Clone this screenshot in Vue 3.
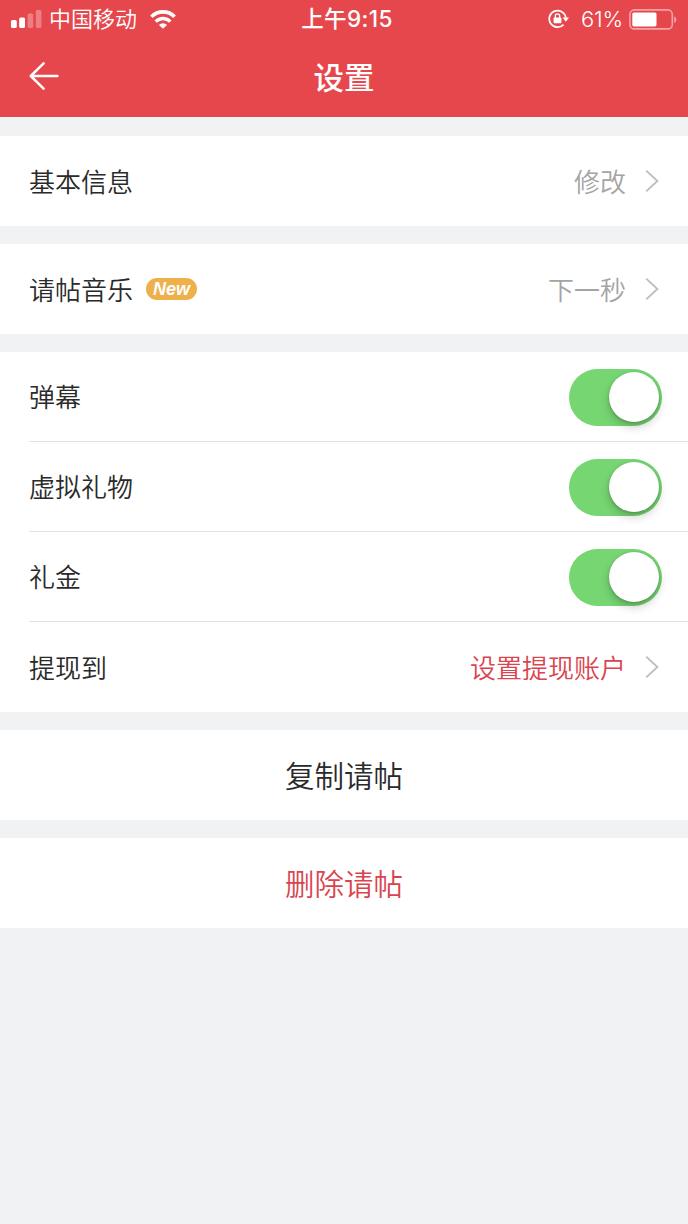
<template>
  <div class="page">
    <header class="header">
      <div class="status-bar">
        <div class="status-left">
          <svg class="signal" viewBox="0 0 31 18">
            <rect x="0" y="10" width="5.8" height="8" rx="1.6" />
            <rect x="8.2" y="7.4" width="5.8" height="10.6" rx="1.6" />
            <rect x="16.6" y="3.6" width="5.6" height="14.4" rx="1.6" opacity="0.3" />
            <rect x="24.8" y="0" width="5.6" height="18" rx="1.6" opacity="0.3" />
          </svg>
          <span class="carrier">中国移动</span>
          <svg class="wifi" viewBox="0 0 26 19">
            <path d="M1.4 6.8A16.2 16.2 0 0 1 24.6 6.8" fill="none" stroke="#fff" stroke-width="3.6" />
            <path d="M5.7 11.6A10.2 10.2 0 0 1 20.3 11.6" fill="none" stroke="#fff" stroke-width="3.3" />
            <path d="M13 18.8L8.9 15A5.8 5.8 0 0 1 17.1 15Z" />
          </svg>
        </div>
        <span class="time">上午9:15</span>
        <div class="status-right">
          <svg class="lock" viewBox="0 0 21 20">
            <path d="M15.6 15.6A8.3 8.3 0 1 1 17.8 8.6" fill="none" stroke="#fff" stroke-width="1.7" />
            <path d="M14.6 8.6H21L17.8 12.8Z" />
            <rect x="5.6" y="8.5" width="7.8" height="5.8" rx="0.8" />
            <path d="M7.3 9V7a2.2 2.2 0 0 1 4.4 0V9" fill="none" stroke="#fff" stroke-width="1.3" />
          </svg>
          <span class="percent">61%</span>
          <svg class="battery" viewBox="0 0 49 21">
            <rect x="0.9" y="0.9" width="42.4" height="19" rx="4.5" fill="none" stroke="#fff" stroke-opacity="0.5" stroke-width="1.6" />
            <rect x="3.3" y="3.4" width="24.2" height="14" rx="1.6" />
            <path d="M45.2 7.2a3.8 3.8 0 0 1 0 6.8z" opacity="0.5" />
          </svg>
        </div>
      </div>
      <div class="nav-bar">
        <svg class="back" viewBox="0 0 30 28">
          <path d="M28.4 14H2M14.6 1.4L1.8 14L14.6 26.6" />
        </svg>
        <h1 class="title">设置</h1>
      </div>
    </header>

    <section v-for="(group, i) in groups" :key="i" class="group">
      <div v-for="item in group" :key="item.label" class="row">
        <span class="label">{{ item.label }}</span>
        <span v-if="item.badge" class="badge">{{ item.badge }}</span>
        <button
          v-if="'on' in item"
          class="switch"
          :class="{ on: item.on }"
          :aria-label="item.label"
          @click="item.on = !item.on"
        >
          <span class="knob"></span>
        </button>
        <template v-else>
          <span class="value" :class="{ red: item.red }">{{ item.value }}</span>
          <svg class="arrow" viewBox="0 0 14 24">
            <path d="M1.2 1.6L12.4 12L1.2 22.4" />
          </svg>
        </template>
      </div>
    </section>

    <button class="action">复制请帖</button>
    <button class="action red">删除请帖</button>
  </div>
</template>

<script setup>
import { ref } from 'vue'

const groups = ref([
  [{ label: '基本信息', value: '修改' }],
  [{ label: '请帖音乐', value: '下一秒', badge: 'New' }],
  [
    { label: '弹幕', on: true },
    { label: '虚拟礼物', on: true },
    { label: '礼金', on: true },
    { label: '提现到', value: '设置提现账户', red: true }
  ]
])
</script>

<style>
body {
  background: #f1f2f4;
}
</style>

<style scoped>
.page {
  min-height: 100vh;
  background: #f1f2f4;
  color: #2a2a2a;
  font-family: Inter, 'Noto Sans CJK SC', sans-serif;
  font-weight: 350;
}

.header {
  height: 117px;
  margin-bottom: 19px;
  background: #e6474c;
  color: #fff;
}

.header svg {
  flex: none;
  fill: #fff;
}

.status-bar {
  display: grid;
  grid-template-columns: 1fr auto 1fr;
  align-items: center;
  height: 38px;
  padding: 0 10px 0 11px;
  font-size: 22px;
  line-height: 38px;
}

.status-left,
.status-right {
  display: flex;
  align-items: center;
}

.status-right {
  justify-content: flex-end;
}

.signal {
  width: 31px;
  height: 18px;
}

.carrier {
  margin: 0 13px 0 7px;
}

.wifi {
  width: 26px;
  height: 19px;
}

.time {
  padding-left: 5px;
  font-size: 22.5px;
  font-weight: 450;
  letter-spacing: 0.4px;
}

.lock {
  width: 21px;
  height: 20px;
}

.percent {
  margin: 0 6px 0 12px;
  letter-spacing: -0.2px;
}

.battery {
  width: 49px;
  height: 21px;
}

.nav-bar {
  display: grid;
  grid-template-columns: 1fr auto 1fr;
  align-items: center;
  height: 76px;
  padding: 0 29px;
}

.header .back {
  width: 30px;
  height: 28px;
  fill: none;
  stroke: #fff;
  stroke-width: 2.5;
  stroke-linecap: round;
  stroke-linejoin: round;
}

.title {
  margin: 0;
  font-size: 30.5px;
  font-weight: 500;
}

.group {
  margin-bottom: 18px;
  background: #fff;
}

.row {
  display: flex;
  align-items: center;
  box-sizing: border-box;
  height: 90px;
  margin-left: 29px;
  padding-right: 29px;
}

.row:not(:last-child) {
  border-bottom: 1px solid #e2e2e2;
}

.label,
.value {
  padding-bottom: 2px;
  font-size: 26px;
}

.badge {
  width: 51px;
  height: 22px;
  margin-left: 13px;
  border-radius: 11px;
  background: #edb04b;
  color: #fff;
  font: italic bold 18px/22px 'Liberation Sans', sans-serif;
  text-align: center;
}

.value {
  margin-left: auto;
  color: #a4a4a4;
}

.red,
.value.red {
  color: #d9444e;
}

.arrow {
  width: 14px;
  height: 24px;
  margin-left: 19px;
  fill: none;
  stroke: #bdbdbd;
  stroke-width: 1.8;
}

.switch {
  box-sizing: border-box;
  width: 93px;
  height: 57px;
  margin: 1px -3px 0 auto;
  padding: 3.5px;
  border: 0;
  border-radius: 29px;
  background: #ddd;
}

.switch.on {
  background: #76d672;
}

.knob {
  display: block;
  width: 50px;
  height: 50px;
  border-radius: 50%;
  background: #fff;
  box-shadow: 0 5px 10px rgba(0, 0, 0, 0.2), 0 1px 3px rgba(0, 0, 0, 0.2);
}

.on .knob {
  margin-left: auto;
}

.action {
  display: block;
  width: 100%;
  height: 90px;
  margin: 0 0 18px;
  padding: 0 0 3px;
  border: 0;
  background: #fff;
  color: #2a2a2a;
  font-family: inherit;
  font-size: 29.5px;
  font-weight: 350;
}

.action.red {
  color: #d9444e;
}
</style>
